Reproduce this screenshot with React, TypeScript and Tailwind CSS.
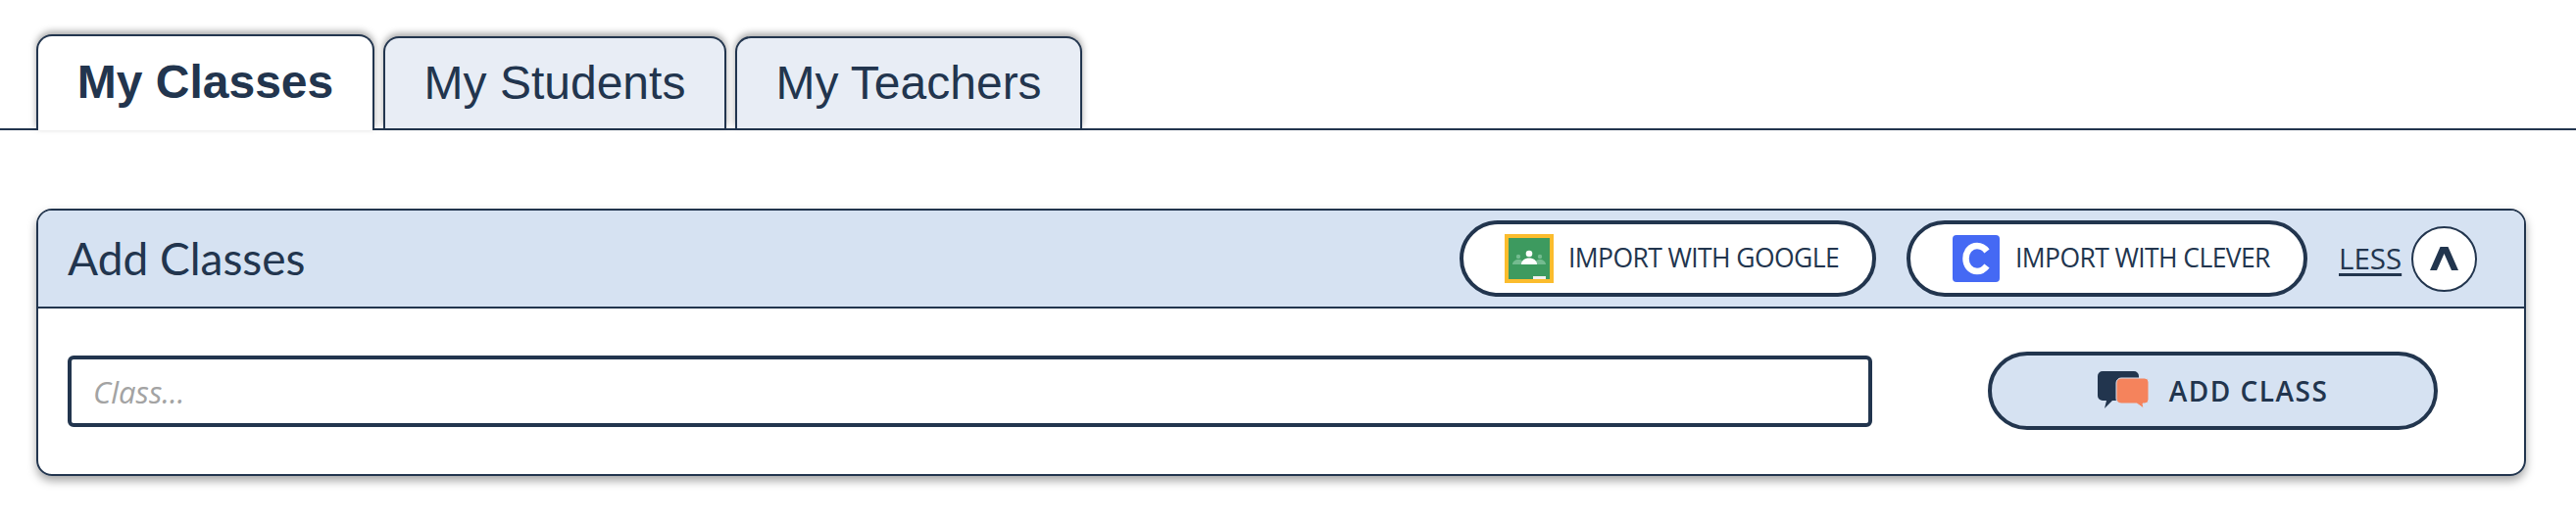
function GoogleIcon() {
  return (
    <svg width="50" height="50" viewBox="0 0 50 50" className="shrink-0">
      <rect width="50" height="50" fill="#fbbc2d" />
      <rect x="4" y="4" width="42" height="42" fill="#3d9a5f" />
      <circle cx="14" cy="23" r="2.200" fill="#74bb90" />
      <circle cx="36" cy="23" r="2.200" fill="#74bb90" />
      <path d="M8 31c0-3 3-5 6-5s6 2 6 5zM30 31c0-3 3-5 6-5s6 2 6 5z" fill="#74bb90" />
      <circle cx="25" cy="20" r="3.300" fill="#fff" />
      <path d="M17 31c0-4 3.500-6.500 8-6.500s8 2.500 8 6.500z" fill="#fff" />
      <rect x="29" y="43" width="13" height="3" fill="#f1f1f1" />
    </svg>
  );
}

function CleverIcon() {
  return (
    <svg width="48" height="48" viewBox="0 0 48 48" className="shrink-0">
      <rect width="48" height="48" rx="4" fill="#4569f4" />
      <path d="M35 16.500C32 12.500 28.500 11 25 11c-7 0-11.500 6-11.500 13S18 37 25 37c3.500 0 7-1.500 10-5.500" fill="none" stroke="#fff" strokeWidth="6.500" />
    </svg>
  );
}

function ChatIcon() {
  return (
    <svg width="53" height="39" viewBox="0 0 53 39" className="shrink-0">
      <path d="M5 0h32a5 5 0 0 1 5 5v20a5 5 0 0 1-5 5H15l-8 8 2-8H5a5 5 0 0 1-5-5V5a5 5 0 0 1 5-5z" fill="#22354e" />
      <path d="M24 7h24a4 4 0 0 1 4 4v18a4 4 0 0 1-4 4h-2l1 5-7-5H24a5 5 0 0 1-5-5V12a5 5 0 0 1 5-5z" fill="#f5835c" stroke="#d6e2f2" strokeWidth="1" />
    </svg>
  );
}

export default function App() {
  return (
    <div className="h-[534px] bg-white font-['Liberation_Sans',sans-serif] text-[#22354e]">
      <div className="flex h-[133px] items-end border-b-2 border-[#22354e] pl-[37px]">
        <div className="-mb-[2px] flex h-[98px] w-[345px] items-center justify-center rounded-t-[16px] border-2 border-b-0 border-[#22354e] bg-white pb-[2px] text-[48px] font-bold shadow-[0_-3px_7px_rgba(0,0,0,0.35)]">
          My Classes
        </div>
        <div className="ml-[9px] flex h-[94px] w-[350px] items-center justify-center rounded-t-[16px] border-2 border-b-0 border-[#22354e] bg-[#e8edf5] text-[48px] shadow-[0_-3px_7px_rgba(0,0,0,0.35)]">
          My Students
        </div>
        <div className="ml-[9px] flex h-[94px] w-[354px] items-center justify-center rounded-t-[16px] border-2 border-b-0 border-[#22354e] bg-[#e8edf5] text-[48px] shadow-[0_-3px_7px_rgba(0,0,0,0.35)]">
          My Teachers
        </div>
      </div>
      <div className="ml-[37px] mt-[80px] flex h-[273px] w-[2540px] flex-col overflow-hidden rounded-[16px] border-2 border-[#22354e] shadow-[0_5px_10px_rgba(0,0,0,0.35)]">
        <div className="flex h-[100px] shrink-0 items-center border-b-2 border-[#22354e] bg-[#d6e2f2] pl-[30px] pr-[48px] font-['Open_Sans',sans-serif]">
          <span className="flex-1 pb-[2px] font-['Lato',sans-serif] text-[46px]">Add Classes</span>
          <div className="flex h-[78px] w-[425px] items-center rounded-full border-4 border-[#22354e] bg-white pl-[42px] text-[26.500px] tracking-[-0.600px]">
            <GoogleIcon />
            <span className="ml-[15px]">IMPORT WITH GOOGLE</span>
          </div>
          <div className="ml-[31px] flex h-[78px] w-[409px] items-center rounded-full border-4 border-[#22354e] bg-white pl-[43px] text-[26.500px] tracking-[-0.600px]">
            <CleverIcon />
            <span className="ml-[16px]">IMPORT WITH CLEVER</span>
          </div>
          <span className="ml-[32px] w-[65px] text-[29.500px] underline decoration-[3px] underline-offset-[4px]">LESS</span>
          <div className="ml-[9px] flex h-[67px] w-[67px] items-center justify-center rounded-full border-2 border-[#22354e] bg-white">
            <svg width="29" height="24" viewBox="0 0 29 24">
              <path d="M10.500 0h8L29 24h-7L14.500 7 7 24H0z" fill="#22354e" />
            </svg>
          </div>
        </div>
        <div className="flex flex-1 items-center pl-[30px] font-['Open_Sans',sans-serif]">
          <input
            placeholder="Class..."
            className="h-[73px] w-[1841px] rounded-[6px] border-4 border-[#22354e] bg-white pl-[22px] text-[31px] italic outline-none placeholder:text-[#a3a3a3]"
          />
          <button className="mb-[2px] ml-[118px] flex h-[80px] w-[459px] items-center justify-center rounded-full border-4 border-[#22354e] bg-[#d6e2f2] text-[28px] font-semibold tracking-[1.500px]">
            <ChatIcon />
            <span className="ml-[20px]">ADD CLASS</span>
          </button>
        </div>
      </div>
    </div>
  );
}
